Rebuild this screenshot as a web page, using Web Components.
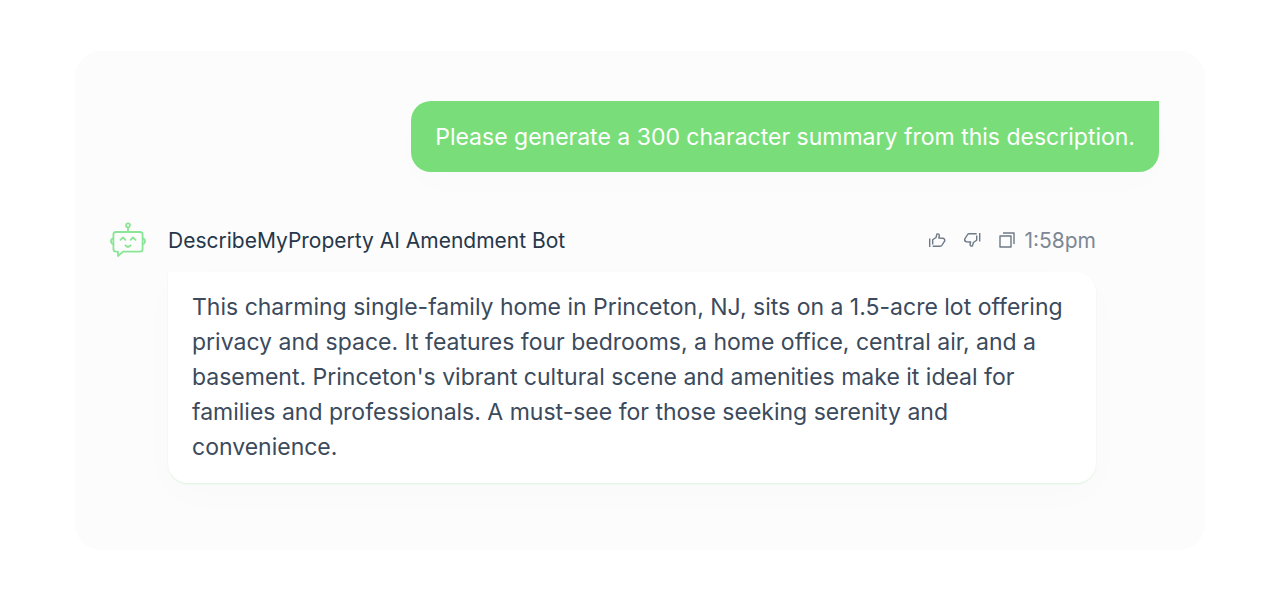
<!DOCTYPE html>
<html lang="en">
<head>
<meta charset="utf-8">
<title>AI Amendment Bot</title>
<style>
  body { margin: 0; background: #fff; font-family: Inter, "Liberation Sans", sans-serif; color: #3b4a5c; }
</style>
</head>
<body>
<chat-panel>
  <user-message>Please generate a 300 character summary from this description.</user-message>
  <bot-message>
    <span slot="name">DescribeMyProperty AI Amendment Bot</span>
    <time slot="time">1:58pm</time>
    This charming single-family home in Princeton, NJ, sits on a 1.5-acre lot offering privacy and space. It features four bedrooms, a home office, central air, and a basement. Princeton's vibrant cultural scene and amenities make it ideal for families and professionals. A must-see for those seeking serenity and convenience.
  </bot-message>
</chat-panel>

<template id="chat-panel">
  <style>
    :host { display: block; padding: 51px 73px 50px 75px; }
    main { display: flex; flex-direction: column; gap: 48px; padding: 50px 46px 67px 35px; border-radius: 26px; background: #fcfcfc; }
  </style>
  <main><slot></slot></main>
</template>

<template id="user-message">
  <style>
    :host { display: block; align-self: flex-end; padding: 19px 24px 17px; border-radius: 20px 0 20px 20px; background: #79de79; color: #fff; font-size: 23px; line-height: 35px; box-shadow: 0 12px 40px rgba(40, 60, 80, .01); }
    p { margin: 0; }
  </style>
  <p><slot></slot></p>
</template>

<template id="bot-message">
  <style>
    :host { display: grid; grid-template-columns: 36px 1fr; column-gap: 22px; row-gap: 12px; margin-right: 63px; }
    header { display: flex; align-items: center; justify-content: space-between; height: 40px; color: #26374a; font-size: 21px; font-weight: 400; }
    bot-avatar { align-self: center; }
    .meta { display: flex; align-items: center; gap: 8px; color: #7d8894; }
    .actions { display: flex; gap: 17px; }
    p { grid-column: 2; margin: 0; padding: 18px 24px; border-radius: 0 20px 20px 20px; background: #fff; font-size: 23px; line-height: 35px; box-shadow: 0 1px 2px rgba(121, 222, 121, .2), 0 12px 40px rgba(40, 60, 80, .015); }
  </style>
  <bot-avatar></bot-avatar>
  <header>
    <slot name="name"></slot>
    <div class="meta">
      <div class="actions">
        <icon-button icon="up" label="Good response"></icon-button>
        <icon-button icon="down" label="Bad response"></icon-button>
        <icon-button icon="copy" label="Copy"></icon-button>
      </div>
      <slot name="time"></slot>
    </div>
  </header>
  <p><slot></slot></p>
</template>

<template id="bot-avatar">
  <style>
    :host { display: block; height: 36px; }
    svg { display: block; fill: none; stroke: #8be596; stroke-width: 1.8; stroke-linecap: round; stroke-linejoin: round; }
  </style>
  <svg width="36" height="36" viewBox="0 0 36 36" aria-hidden="true">
    <circle cx="18" cy="3.3" r="2"/>
    <path d="M18 5.5V10M6 10H30Q32.6 10 32.6 12.6V27Q32.6 29.6 30 29.6H13L8 34V29.6H6Q3.400 29.600 3.400 27V12.600Q3.400 10 6 10Z"/>
    <path d="M3.400 16.500Q1 17 1 19.200T3.400 22M32.600 16.500Q35 17 35 19.200T32.600 22M10.500 17.800L13 15.500L15.500 17.800M20.500 17.800L23 15.500L25.500 17.800M15.500 23.500Q18 26 20.500 23.500"/>
  </svg>
</template>

<template id="icon-button">
  <style>
    :host { display: block; }
    button { display: block; margin: 0; padding: 0; border: 0; background: none; color: #6d7986; cursor: pointer; }
    svg { display: block; fill: none; stroke: currentColor; stroke-width: 1.4; stroke-linejoin: round; }
    g { display: none; }
    :host([icon="up"]) .up, :host([icon="down"]) .down, :host([icon="copy"]) .copy { display: block; }
  </style>
  <button type="button">
    <svg width="18" height="18" viewBox="0 0 18 18" aria-hidden="true">
      <g class="up"><path d="M1.700 7.500V16M4.700 13.500V8.800L8 6.500L9 3Q11.500 2.500 11.300 5L10.800 7L15 7.200Q17.200 7.800 16.700 9.800L13.800 14.500Q13.300 15.300 12.200 15.300H4.700"/></g>
      <g class="down"><path d="M16.700 2V10.500M13.700 4.500V9.200L10.400 11.500L9.400 15Q6.900 15.500 7.100 13L7.600 11L3.400 10.800Q1.200 10.200 1.700 8.200L4.600 3.500Q5.100 2.700 6.200 2.700H13.700"/></g>
      <g class="copy"><path d="M2 5H13V16H2ZM5 2H16V13"/></g>
    </svg>
  </button>
</template>

<script>
  class TemplateElement extends HTMLElement {
    constructor() {
      super();
      const template = document.getElementById(this.localName);
      this.attachShadow({ mode: "open" }).append(template.content.cloneNode(true));
    }
  }
  class IconButton extends TemplateElement {
    connectedCallback() {
      this.shadowRoot.querySelector("button").setAttribute("aria-label", this.getAttribute("label"));
    }
  }
  customElements.define("icon-button", IconButton);
  customElements.define("bot-avatar", class extends TemplateElement {});
  customElements.define("bot-message", class extends TemplateElement {});
  customElements.define("user-message", class extends TemplateElement {});
  customElements.define("chat-panel", class extends TemplateElement {});
</script>
</body>
</html>
